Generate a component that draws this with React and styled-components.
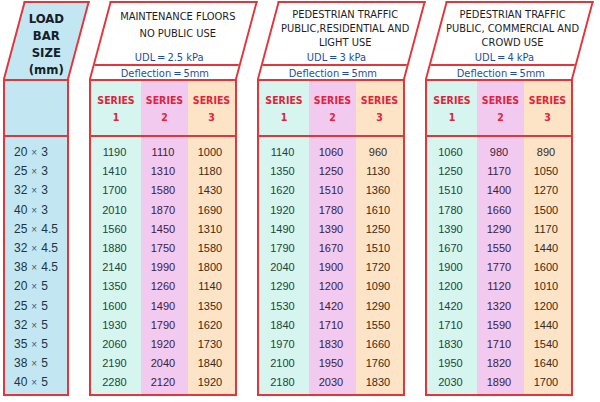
import React from 'react';
import styled, { createGlobalStyle } from 'styled-components';

const RED = '#e4353a';
const COND = '"Liberation Sans Narrow", "DejaVu Sans Condensed", "Roboto Condensed", "Liberation Sans", sans-serif';

const GlobalStyle = createGlobalStyle`
  body {
    margin: 0;
    background: #fff;
    font-family: "Liberation Sans", Arial, sans-serif;
  }
`;

const Page = styled.div`
  display: flex;
  gap: 20px;
  width: 600px;
  height: 402px;
  padding: 1px 0 0 3px;
  box-sizing: border-box;
`;

const Column = styled.div`
  display: flex;
  flex-direction: column;
  width: ${(p) => p.width}px;
`;

const Slant = styled.div`
  height: 78px;
  box-sizing: border-box;
  border: 2px solid ${RED};
  border-bottom: none;
  background: ${(p) => p.bg || '#fff'};
  transform: skewX(-15deg);
  transform-origin: bottom left;
  display: flex;
  flex-direction: column;
`;

const Upright = styled.div`
  transform: skewX(15deg);
`;

const SizeTitle = styled(Upright)`
  padding-top: 7px;
  font-family: ${COND};
  font-weight: bold;
  font-size: 13px;
  line-height: 17px;
  color: #14202a;
  text-align: center;
`;

const Upper = styled.div`
  flex: 1;
  display: flex;
  flex-direction: column;
  align-items: center;
`;

const Title = styled(Upright)`
  padding-top: 5px;
  font-family: ${COND};
  font-size: 11px;
  line-height: ${(p) => (p.$spread ? 17 : 14)}px;
  color: #1d1d1f;
  text-align: center;
  white-space: pre-line;
`;

const Udl = styled(Upright)`
  margin-top: auto;
  font-family: ${COND};
  font-size: 11px;
  line-height: 11px;
  color: #1f4f9c;
  margin-bottom: 1px;
`;

const Band = styled.div`
  height: 13px;
  border-top: 2px solid ${RED};
  display: flex;
  justify-content: center;
  align-items: center;
`;

const BandText = styled(Upright)`
  font-family: ${COND};
  font-size: 11px;
  line-height: 15px;
  padding-top: 2px;
  color: #1f4f9c;
`;

const Body = styled.div`
  border: 2px solid ${RED};
  background: ${(p) => p.bg || '#fff'};
  display: ${(p) => (p.grid ? 'grid' : 'block')};
  grid-template-columns: 50px 47px 1fr;
`;

const HeadCell = styled.div`
  box-sizing: border-box;
  height: 56px;
  padding-top: 11px;
  border-bottom: 2px solid ${RED};
  font-family: ${COND};
  font-weight: bold;
  font-size: 10.5px;
  line-height: 17px;
  color: #e0223a;
  text-align: center;
`;

const Series = styled.div`
  background: ${(p) => p.bg};
`;

const Rows = styled.div`
  padding: 6px 0 2px;
`;

const Cell = styled.div`
  height: 19.2px;
  line-height: 19.2px;
  font-size: ${(p) => (p.left ? 12 : 11)}px;
  color: ${(p) => p.color};
  text-align: ${(p) => (p.left ? 'left' : 'center')};
  padding-left: ${(p) => (p.left ? '9px' : '0')};
  padding-right: ${(p) => (p.left ? '0' : '3px')};
  white-space: nowrap;
`;

const Times = styled.span`
  font-size: 10px;
  margin: 0 4px;
  color: #46606e;
`;

const sizes = [
  ['20', '3'], ['25', '3'], ['32', '3'], ['40', '3'], ['25', '4.5'], ['32', '4.5'], ['38', '4.5'],
  ['20', '5'], ['25', '5'], ['32', '5'], ['35', '5'], ['38', '5'], ['40', '5'],
];

const seriesStyle = [
  { bg: '#d6f5ef', color: '#1b463a' },
  { bg: '#f2caf0', color: '#3a2140' },
  { bg: '#fde4c7', color: '#3b2a16' },
];

const groups = [
  {
    title: 'MAINTENANCE FLOORS\nNO PUBLIC USE',
    spread: true,
    udl: 'UDL\u2009=\u20092.5 kPa',
    data: [
      [1190, 1410, 1700, 2010, 1560, 1880, 2140, 1350, 1600, 1930, 2060, 2190, 2280],
      [1110, 1310, 1580, 1870, 1450, 1750, 1990, 1260, 1490, 1790, 1920, 2040, 2120],
      [1000, 1180, 1430, 1690, 1310, 1580, 1800, 1140, 1350, 1620, 1730, 1840, 1920],
    ],
  },
  {
    title: 'PEDESTRIAN TRAFFIC\nPUBLIC,RESIDENTIAL AND\nLIGHT USE',
    udl: 'UDL\u2009=\u20093 kPa',
    data: [
      [1140, 1350, 1620, 1920, 1490, 1790, 2040, 1290, 1530, 1840, 1970, 2100, 2180],
      [1060, 1250, 1510, 1780, 1390, 1670, 1900, 1200, 1420, 1710, 1830, 1950, 2030],
      [960, 1130, 1360, 1610, 1250, 1510, 1720, 1090, 1290, 1550, 1660, 1760, 1830],
    ],
  },
  {
    title: 'PEDESTRIAN TRAFFIC\nPUBLIC, COMMERCIAL AND\nCROWD USE',
    udl: 'UDL\u2009=\u20094 kPa',
    data: [
      [1060, 1250, 1510, 1780, 1390, 1670, 1900, 1200, 1420, 1710, 1830, 1950, 2030],
      [980, 1170, 1400, 1660, 1290, 1550, 1770, 1120, 1320, 1590, 1710, 1820, 1890],
      [890, 1050, 1270, 1500, 1170, 1440, 1600, 1010, 1200, 1440, 1540, 1640, 1700],
    ],
  },
];

const SIZE_BG = '#c3e7f2';

const App = () => (
  <>
    <GlobalStyle />
    <Page>
      <Column width={66}>
        <Slant bg={SIZE_BG}>
          <SizeTitle>LOAD<br />BAR<br />SIZE<br />(mm)</SizeTitle>
        </Slant>
        <Body bg={SIZE_BG}>
          <HeadCell />
          <Rows>
            {sizes.map(([a, b]) => (
              <Cell key={a + b} left color="#1b3446">
                {a}<Times>×</Times>{b}
              </Cell>
            ))}
          </Rows>
        </Body>
      </Column>

      {groups.map((g) => (
        <Column width={148} key={g.udl}>
          <Slant>
            <Upper>
              <Title $spread={g.spread}>{g.title}</Title>
              <Udl>{g.udl}</Udl>
            </Upper>
            <Band>
              <BandText>Deflection{'\u2009=\u2009'}5mm</BandText>
            </Band>
          </Slant>
          <Body grid>
            {g.data.map((col, i) => (
              <Series key={i} bg={seriesStyle[i].bg}>
                <HeadCell>SERIES<br />{i + 1}</HeadCell>
                <Rows>
                  {col.map((v, r) => (
                    <Cell key={r} color={seriesStyle[i].color}>{v}</Cell>
                  ))}
                </Rows>
              </Series>
            ))}
          </Body>
        </Column>
      ))}
    </Page>
  </>
);

export default App;
